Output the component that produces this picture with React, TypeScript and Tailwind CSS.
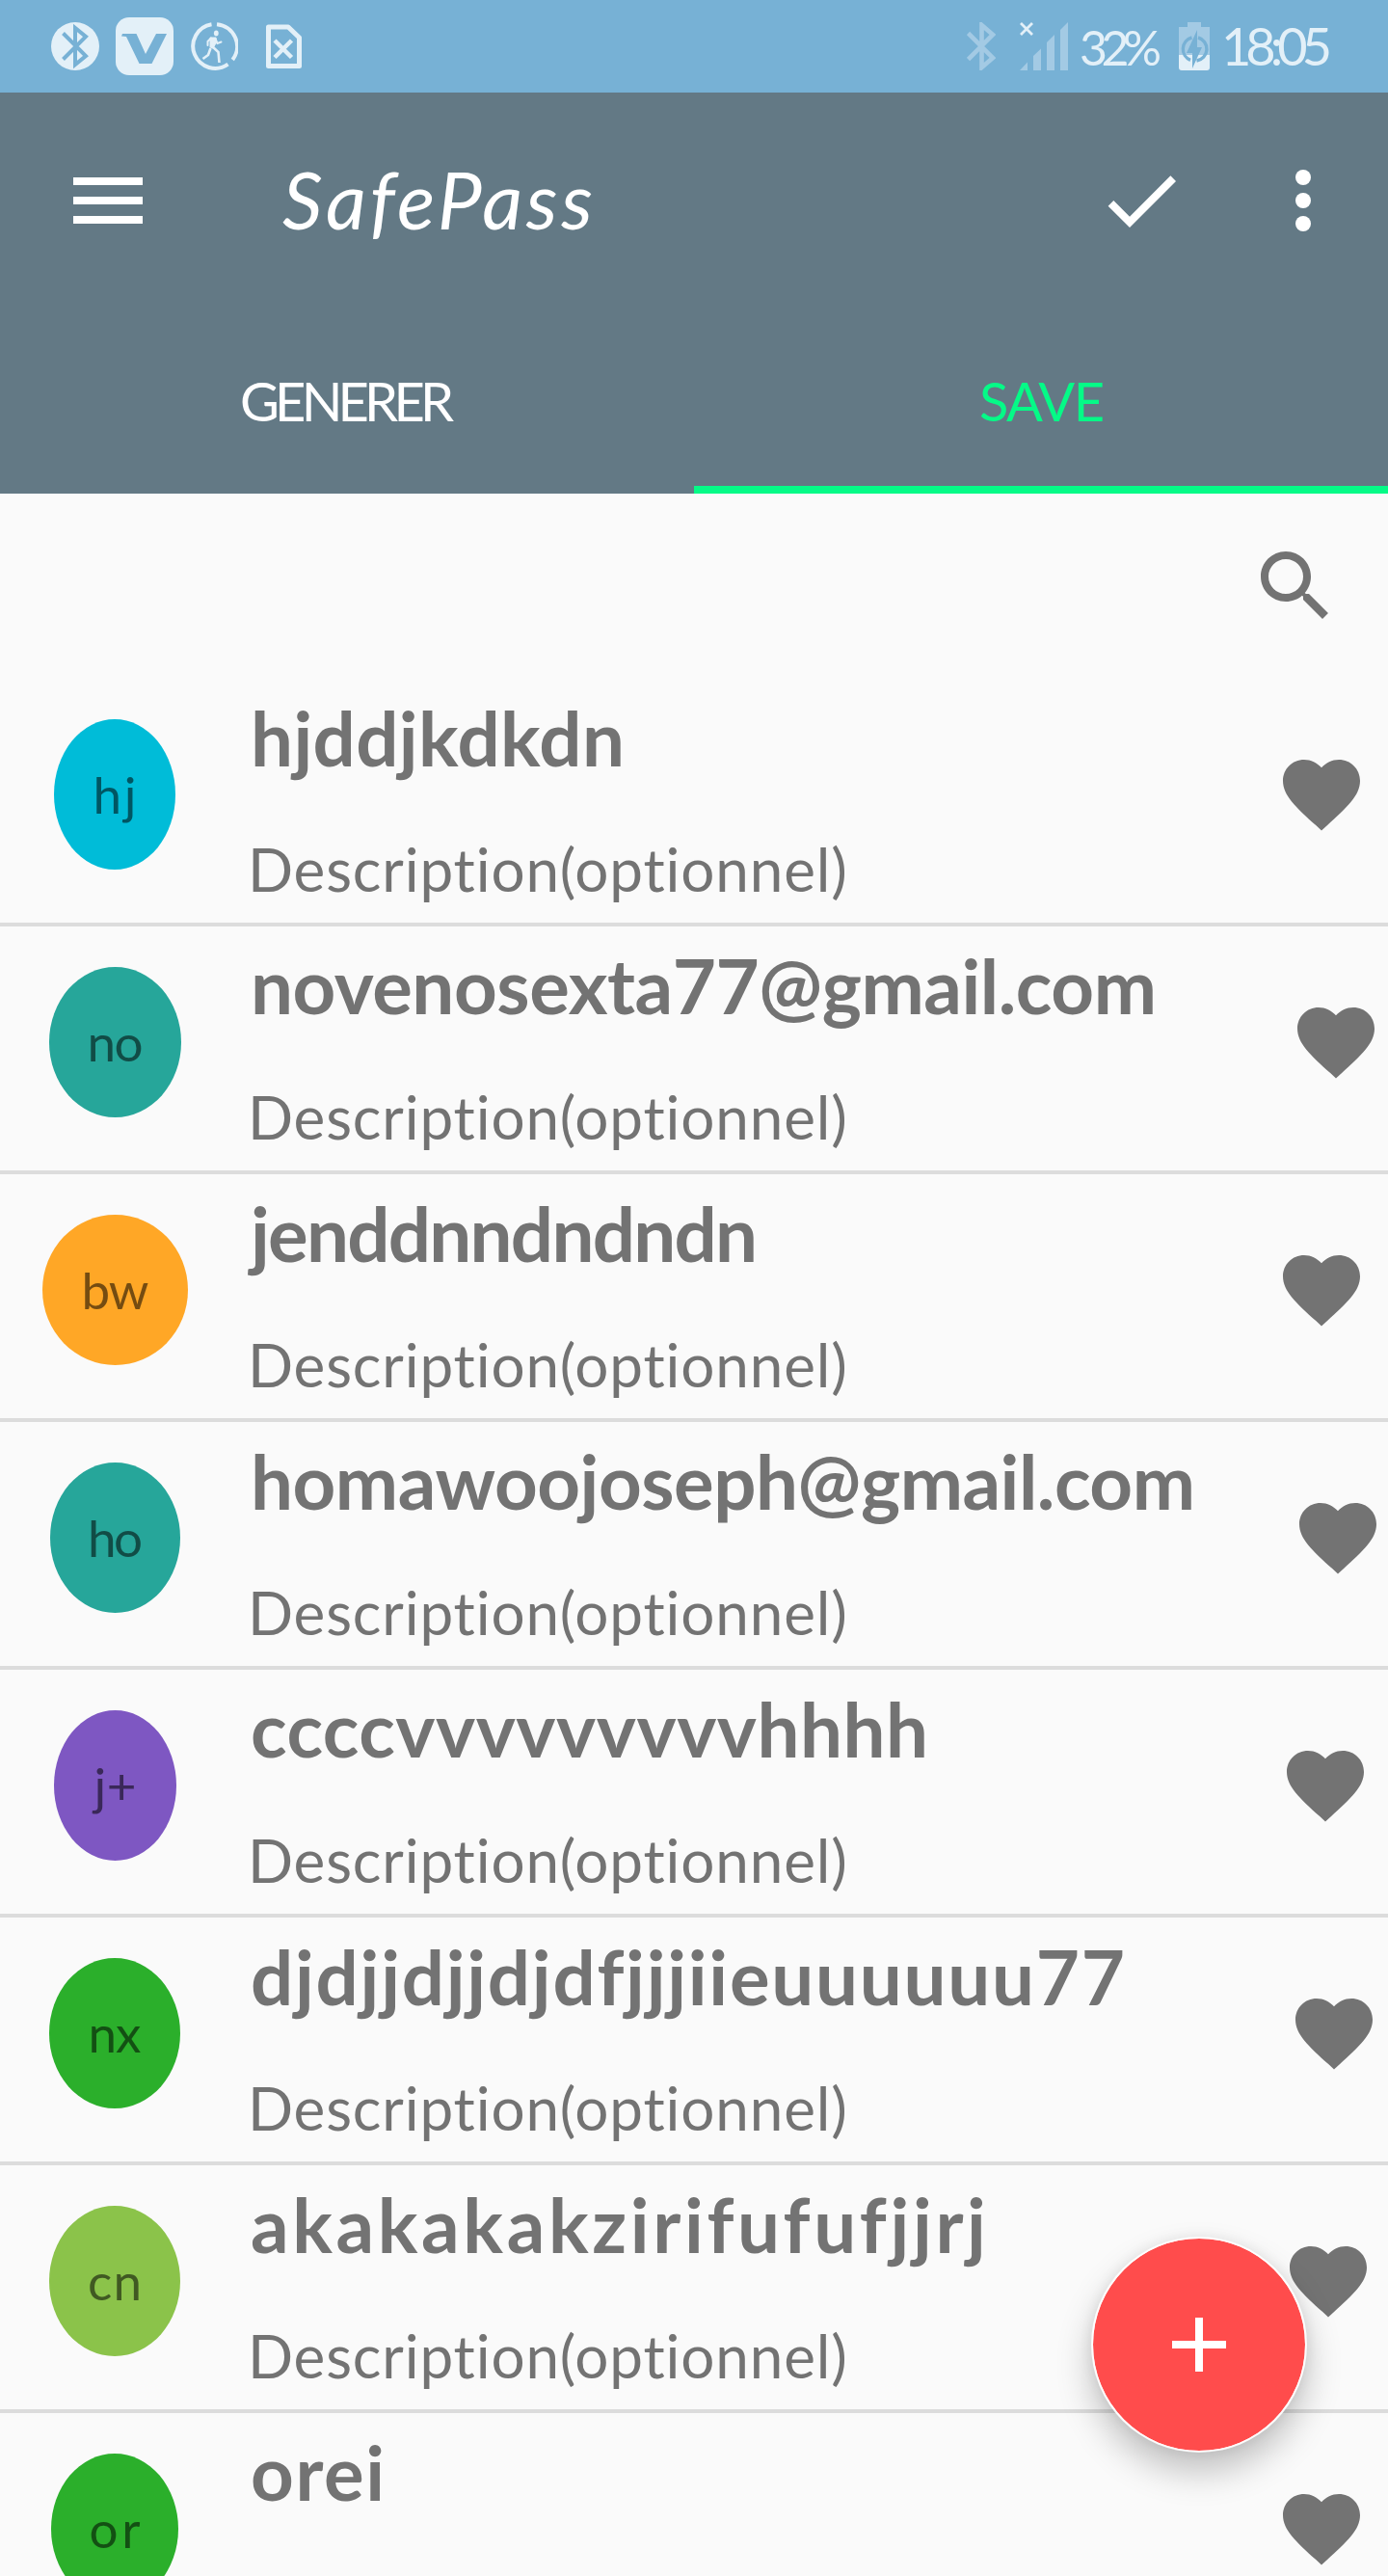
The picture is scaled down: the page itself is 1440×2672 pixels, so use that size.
import { useLayoutEffect, useRef } from "react";

type FitTextProps = { text: string; width: number; className?: string };

// Spreads the letters of a single line evenly over a given width.
function FitText({ text, width, className = "" }: FitTextProps) {
  const ref = useRef<HTMLSpanElement>(null);
  useLayoutEffect(() => {
    const el = ref.current;
    if (!el) return;
    el.style.letterSpacing = "0px";
    const natural = el.getBoundingClientRect().width;
    const spacing = (width - natural) / Math.max(1, text.length - 1);
    el.style.letterSpacing = `${spacing}px`;
    el.style.marginRight = `${-spacing}px`;
  }, [text, width]);
  return (
    <span ref={ref} className={`inline-block whitespace-pre ${className}`}>
      {text}
    </span>
  );
}

type Entry = {
  initials: string;
  initialsWidth: number;
  avatar: string;
  title: string;
  titleWidth: number;
  heart: string;
};

const entries: Entry[] = [
  { initials: "hj", initialsWidth: 45, avatar: "ml-14 w-[126px] bg-[#00bcd8]", title: "hjddjkdkdn", titleWidth: 388, heart: "mr-[21px]" },
  { initials: "no", initialsWidth: 58, avatar: "ml-[51px] w-[137px] bg-[#26a69a]", title: "novenosexta77@gmail.com", titleWidth: 940, heart: "mr-[6px]" },
  { initials: "bw", initialsWidth: 70, avatar: "ml-[44px] w-[151px] bg-[#ffa726]", title: "jenddnndndndn", titleWidth: 526, heart: "mr-[21px]" },
  { initials: "ho", initialsWidth: 57, avatar: "ml-[52px] w-[135px] bg-[#26a69a]", title: "homawoojoseph@gmail.com", titleWidth: 980, heart: "mr-[4px]" },
  { initials: "j+", initialsWidth: 44, avatar: "ml-14 w-[127px] bg-[#7e57c2]", title: "ccccvvvvvvvvvhhhh", titleWidth: 703, heart: "mr-[17px]" },
  { initials: "nx", initialsWidth: 55, avatar: "ml-[51px] w-[136px] bg-[#2baf2b]", title: "djdjjdjjdjdfjjjiieuuuuuu77", titleWidth: 906, heart: "mr-[8px]" },
  { initials: "cn", initialsWidth: 56, avatar: "ml-[51px] w-[136px] bg-[#8bc34a]", title: "akakakakzirifufufjjrj", titleWidth: 762, heart: "mr-[14px]" },
  { initials: "or", initialsWidth: 53, avatar: "ml-[53px] w-[132px] bg-[#2baf2b]", title: "orei", titleWidth: 139, heart: "mr-[21px]" },
];

function StatusBar() {
  return (
    <div className="flex h-24 shrink-0 items-center bg-[#77b1d5] text-[54px] leading-[96px] text-[#e3f0f8]">
      <svg className="ml-[53px] h-[50px] w-[50px] shrink-0" viewBox="53 23 50 50">
        <circle cx="78" cy="48" r="25" fill="#e3f0f8" />
        <path d="M65.5 34.5L89 58 78 67V29L89 38 65.5 61.5" fill="none" stroke="#77b1d5" strokeWidth="4" />
      </svg>
      <svg className="ml-[17px] h-[60px] w-[60px] shrink-0" viewBox="120 18 60 60">
        <rect x="120" y="18" width="60" height="60" rx="14" fill="#e3f0f8" />
        <path d="M127 35h14.500l9.500 21 11-21h11l-15.500 31h-13L131 38l-5-.5z" fill="#77b1d5" />
      </svg>
      <svg className="ml-[17px] h-[50px] w-[50px] shrink-0" viewBox="197 23 50 50" fill="none" stroke="#e3f0f8">
        <path d="M225 25.200A23 23 0 0 1 241.300 62M236.500 66.700A23 23 0 1 1 219.500 25.200" strokeWidth="4" />
        <ellipse cx="224.300" cy="34.500" rx="2.400" ry="2.900" fill="#e3f0f8" stroke="none" />
        <path d="M218 39l6 0 1 4-4 7-3-1z" fill="#e3f0f8" strokeWidth="1" />
        <path d="M219 39.500l-3.500 3.500v4M223 40l2.500 5 4-1.500" strokeWidth="2" strokeLinecap="round" />
        <path d="M220 48l6.500 6 1 11M218.500 50l-2.500 7-5.500 4" strokeWidth="2.600" />
      </svg>
      <svg className="ml-[29px] h-[46px] w-[37px] shrink-0" viewBox="276 25 37 46" fill="none" stroke="#e3f0f8">
        <path d="M278.500 28h20.500l11.500 11v29.500h-32z" strokeWidth="5" strokeLinejoin="round" />
        <path d="M285 42l17.500 17.500M302.500 42L285 59.500" strokeWidth="4.500" />
      </svg>

      <svg className="ml-auto h-[50px] w-[30px] shrink-0" viewBox="1003 23 30 50">
        <path d="M1004.500 34.500L1030 60 1018.500 70V26L1030 36 1004.500 61.500" fill="none" stroke="#a3cae4" strokeWidth="4.600" />
      </svg>
      <svg className="ml-[25px] h-[50px] w-[50px] shrink-0" viewBox="1058 23 50 50" fill="#a3cae4">
        <path d="M1058 73l8-8.500v8.500zM1072 58l8-7.500V73h-8zM1086 44l8-8v37h-8zM1100 31l8-8v50h-8z" />
        <path d="M1059 24l12 12M1071 24l-12 12" stroke="#e3f0f8" strokeWidth="2.800" />
      </svg>
      <div className="ml-[12px] w-[84px]"><FitText text="32%" width={85} className="text-[50px]" /></div>
      <svg className="ml-[19px] h-[50px] w-[32px] shrink-0" viewBox="1223 23 32 50">
        <path d="M1232 23h14v5h9v29h-32V28h9z" fill="#a3cae4" />
        <path d="M1223 57h32v13q0 3-3 3h-26q-3 0-3-3z" fill="#e3f0f8" />
        <path d="M1236.500 39a12.300 12.300 0 0 0-1.500 23.300M1243 39a12.300 12.300 0 0 1-1.500 24" fill="none" stroke="#77b1d5" strokeWidth="3.400" />
        <path d="M1242 31v18h5l-10 22V55h-6z" fill="#77b1d5" />
      </svg>
      <div className="mr-[58px] ml-[12px] w-[115px]"><FitText text="18:05" width={115} /></div>
    </div>
  );
}

function AppBar() {
  return (
    <header className="shrink-0 bg-[#637985] text-white">
      <div className="flex h-56 items-center">
        <div className="ml-[76px] flex w-[72px] flex-col gap-3">
          <div className="h-2 bg-white" />
          <div className="h-2 bg-white" />
          <div className="h-2 bg-white" />
        </div>
        <h1 className="ml-[145px] pb-1 text-[82px] leading-none italic">
          <FitText text="SafePass" width={322} />
        </h1>
        <svg className="ml-auto h-24 w-24" viewBox="0 0 24 24" fill="white">
          <path d="M9 16.170L4.830 12l-1.420 1.410L9 19 21 7l-1.410-1.410z" />
        </svg>
        <div className="mr-20 ml-28 flex flex-col gap-2">
          <div className="h-4 w-4 rounded-full bg-white" />
          <div className="h-4 w-4 rounded-full bg-white" />
          <div className="h-4 w-4 rounded-full bg-white" />
        </div>
      </div>
      <nav className="flex h-48 text-[56px] leading-[192px]">
        <div className="w-1/2 pl-[249px]">
          <FitText text="GENERER" width={222} />
        </div>
        <div className="w-1/2 border-b-8 border-[#05fa87] pl-[296px] text-[#05fa87]">
          <FitText text="SAVE" width={130} />
        </div>
      </nav>
    </header>
  );
}

function Row({ entry }: { entry: Entry }) {
  return (
    <li className="flex h-[257px] shrink-0 items-start border-b-4 border-[#dcdcdc]">
      <div className="w-[257px] shrink-0 pt-[42px]">
        <div className={`flex h-[156px] items-center justify-center rounded-[50%] pb-0.5 text-[53px] leading-none text-black/54 ${entry.avatar}`}>
          <FitText text={entry.initials} width={entry.initialsWidth} />
        </div>
      </div>
      <div className="min-w-0 flex-1 text-[#737373]">
        <div className="h-[122px] pl-[3px] text-[78px] leading-[123px] font-bold">
          <FitText text={entry.title} width={entry.titleWidth} />
        </div>
        <div className="mt-[25px] h-[100px] text-[62px] leading-[100px]">
          <FitText text="Description(optionnel)" width={624} />
        </div>
      </div>
      <svg className={`mt-[72px] -ml-24 h-24 w-24 shrink-0 ${entry.heart}`} viewBox="0 0 24 24" fill="#737373">
        <path d="M12 21.350l-1.450-1.320C5.400 15.360 2 12.280 2 8.500 2 5.420 4.420 3 7.500 3c1.740 0 3.410.81 4.500 2.090C13.090 3.810 14.760 3 16.500 3 19.580 3 22 5.420 22 8.500c0 3.780-3.400 6.860-8.550 11.540L12 21.350z" />
      </svg>
    </li>
  );
}

export default function App() {
  return (
    <main className="relative flex h-[2672px] w-[1440px] flex-col overflow-hidden bg-[#fafafa] font-['Lato',sans-serif]">
      <StatusBar />
      <AppBar />
      <div className="flex h-48 shrink-0 items-center justify-end pr-12">
        <svg className="h-24 w-24" viewBox="0 0 24 24" fill="#737373">
          <path d="M15.500 14h-.79l-.28-.27C15.410 12.590 16 11.110 16 9.500 16 5.910 13.090 3 9.500 3S3 5.910 3 9.500 5.910 16 9.500 16c1.610 0 3.090-.59 4.230-1.570l.27.28v.79l5 4.990L20.490 19l-4.990-5zm-6 0C7.010 14 5 11.990 5 9.500S7.010 5 9.500 5 14 7.010 14 9.500 11.990 14 9.500 14z" />
        </svg>
      </div>
      <ul className="flex flex-col">
        {entries.map((entry) => (
          <Row key={entry.title} entry={entry} />
        ))}
      </ul>
      <button className="absolute right-[84px] bottom-[128px] flex h-56 w-56 items-center justify-center rounded-full border-2 border-white/90 bg-[#ff4c4c] bg-clip-padding shadow-[0_20px_36px_rgba(0,0,0,0.23),0_0_14px_rgba(0,0,0,0.07)]">
        <svg className="h-14 w-14" viewBox="0 0 14 14" fill="white">
          <path d="M6 0h2v6h6v2H8v6H6V8H0V6h6z" />
        </svg>
      </button>
    </main>
  );
}
